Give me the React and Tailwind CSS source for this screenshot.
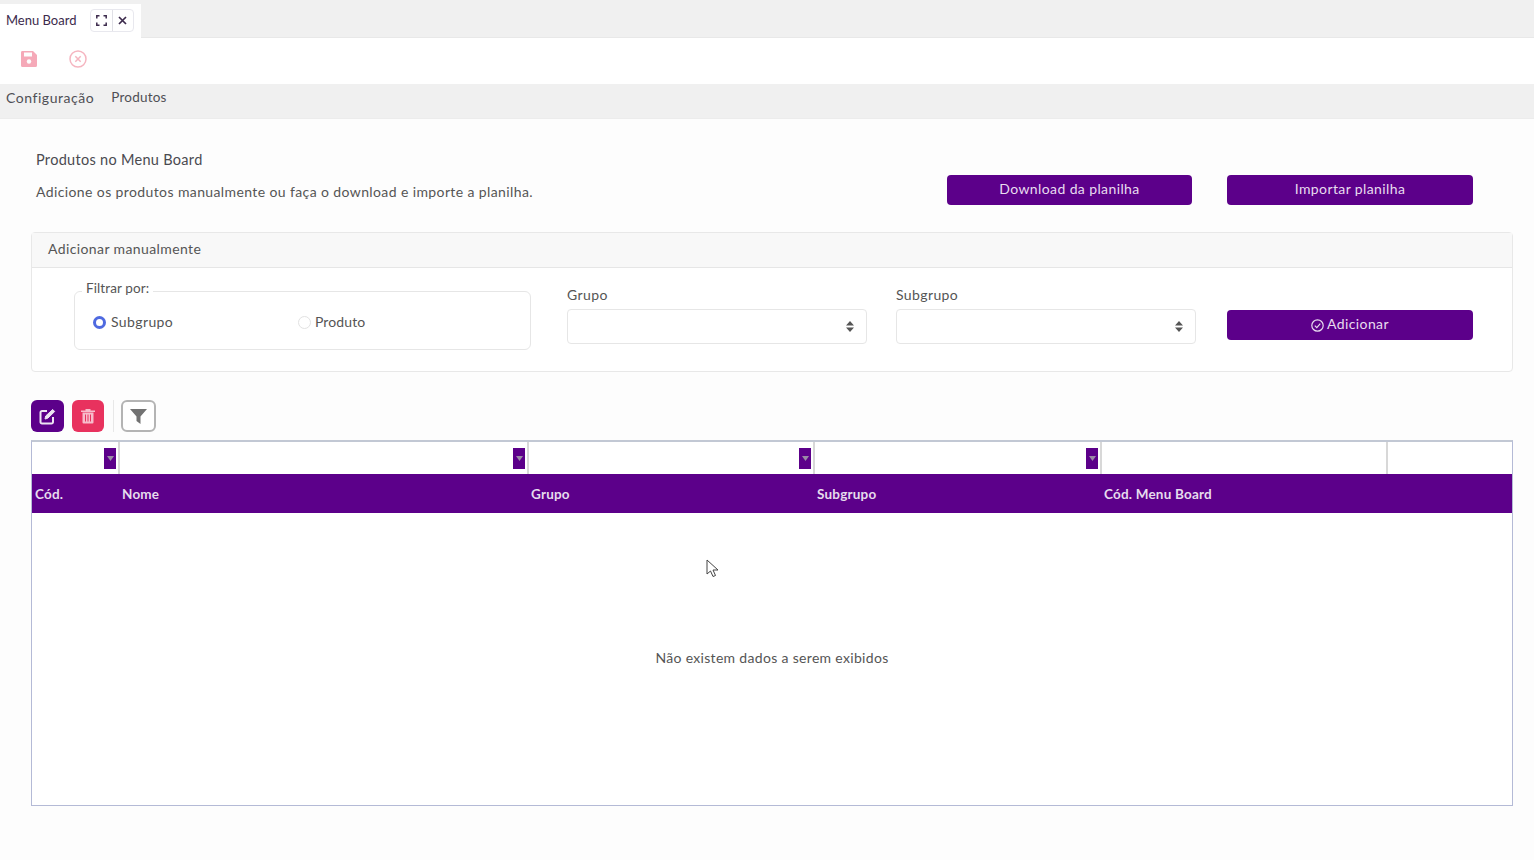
const P = "bg-[#5c008a]";

function Sel() {
  return (
    <div className="h-[35px] rounded border border-[#e6e6e6] bg-white flex items-center justify-end pr-[12px]">
      <svg width="8" height="11" viewBox="0 0 8 11"><path d="M4 0 8 4.400H0zM4 11 0 6.600h8z" fill="#555" /></svg>
    </div>
  );
}

function Fil() {
  return (
    <div className={`absolute right-[2px] top-[6px] w-[12px] h-[21px] ${P} flex items-center justify-center`}>
      <svg width="7" height="5" viewBox="0 0 7 5"><path d="M0 0h7L3.500 5z" fill="#9a8aa6" /></svg>
    </div>
  );
}

export default function App() {
  const cols = [true, true, true, true, false, null];
  const heads = ["Cód.", "Nome", "Grupo", "Subgrupo", "Cód. Menu Board", ""];
  return (
    <div className="relative w-[1534px] h-[860px] overflow-hidden bg-[#fdfdfd] text-[#555] text-[14px]" style={{ fontFamily: '"Lato", "Open Sans", sans-serif', letterSpacing: "0.39px" }}>
      {/* tab bar */}
      <div className="h-[38px] bg-[#f0f0f0] border-b border-[#e8e8e8] flex items-end">
        <div className="w-[141px] h-[34px] bg-white flex items-center pl-[6px] mb-[-1px] pb-[2px]">
          <span className="text-[#3c2a4c] text-[13px] tracking-normal w-[84px] whitespace-nowrap pt-[1px]">Menu Board</span>
          <div className="flex h-[23px] w-[44px] border border-[#e8e8ee] rounded">
            <div className="flex-1 flex items-center justify-center border-r border-[#e0e0e6]">
              <svg width="11" height="11" viewBox="0 0 11 11" fill="none" stroke="#3c2a4c" strokeWidth="1.500"><path d="M.8 3.500V.8h2.700M7.500.8h2.700v2.700M10.200 7.500v2.700H7.500M3.500 10.200H.8V7.500" /></svg>
            </div>
            <div className="flex-1 flex items-center justify-center">
              <svg width="9" height="9" viewBox="0 0 9 9" fill="none" stroke="#3c2a4c" strokeWidth="1.700"><path d="M1 1l7 7M8 1 1 8" /></svg>
            </div>
          </div>
        </div>
      </div>
      {/* toolbar */}
      <div className="h-[46px] bg-white flex items-center pl-[20px] pb-[4px] gap-[31px]">
        <svg width="18" height="18" viewBox="0 0 18 18"><path d="M2 1h11l4 4v10.500a1.500 1.500 0 0 1-1.500 1.500h-13A1.500 1.500 0 0 1 1 15.500v-13A1.500 1.500 0 0 1 2 1z" fill="#f5a9b8" /><rect x="4" y="2.500" width="8" height="4" fill="#fdfdfd" /><circle cx="9" cy="11.500" r="2.200" fill="#fdfdfd" /></svg>
        <svg width="18" height="18" viewBox="0 0 18 18" fill="none" stroke="#f5b5c0" strokeWidth="1.500"><circle cx="9" cy="9" r="8" /><path d="M6.300 6.300l5.400 5.400M11.700 6.300l-5.400 5.400" /></svg>
      </div>
      {/* nav */}
      <div className="h-[35px] bg-[#f0f0f0] border-b border-[#ececec] flex items-center pl-[6px] pb-[8px] gap-[17px] text-[#4f4f55]">
        <span className="tracking-[0.55px]">Configuração</span>
        <span className="text-[13.5px] tracking-[0.2px]">Produtos</span>
      </div>

      <main className="pl-[31px] pr-[21px]">
        {/* intro */}
        <div className="h-[113px] flex items-start">
          <div className="pl-[5px] pt-[31px] flex-1">
            <div className="text-[14.5px] tracking-[0.3px] text-[#4a4a50] leading-[20px]">Produtos no Menu Board</div>
            <div className="mt-[12px] leading-[20px] whitespace-nowrap">Adicione os produtos manualmente ou faça o download e importe a planilha.</div>
          </div>
          <div className="flex gap-[35px] pt-[56px] pr-[40px]">
            <button className={`w-[245px] h-[30px] rounded pb-[3px] ${P} text-[#e8dcef] text-[14px]`}>Download da planilha</button>
            <button className={`w-[246px] h-[30px] rounded pb-[3px] ${P} text-[#e8dcef] text-[14px]`}>Importar planilha</button>
          </div>
        </div>

        {/* card */}
        <section className="h-[140px] rounded border border-[#e8e8e8] bg-white">
          <div className="h-[35px] bg-[#f8f8f8] border-b border-[#e6e6e6] flex items-center pl-[16px] pb-[3px]">Adicionar manualmente</div>
          <div className="flex items-start pl-[42px] pr-[39px]">
            <fieldset className="w-[457px] h-[71px] mt-[11px] rounded-md border border-[#e6e6e6] pl-[7px] m-0">
              <legend className="px-[4px] leading-[17px] pt-[1px] pb-[6px] text-[13.5px] tracking-[0.1px]">Filtrar por:</legend>
              <div className="flex items-center pl-[10px] pt-[8px]">
                <span className="w-[13px] h-[13px] rounded-full border-[3px] border-[#4f6ae0] bg-white ml-[1px]" />
                <span className="ml-[5px] w-[187px] pb-[1px]">Subgrupo</span>
                <span className="w-[13px] h-[13px] rounded-full border border-[#e2e2e2] bg-white" />
                <span className="ml-[4px] pb-[1px] tracking-[0.1px]">Produto</span>
              </div>
            </fieldset>
            <div className="w-[300px] ml-[36px] pt-[17px]">
              <div className="leading-[20px] mb-[4px]">Grupo</div>
              <Sel />
            </div>
            <div className="w-[300px] ml-[29px] pt-[17px]">
              <div className="leading-[20px] mb-[4px]">Subgrupo</div>
              <Sel />
            </div>
            <button className={`w-[246px] h-[30px] ml-[31px] mt-[42px] rounded ${P} text-[#e8dcef] flex items-center justify-center gap-[3px]`}>
              <svg width="13" height="13" viewBox="0 0 13 13" fill="none" stroke="#e8dcef" strokeWidth="1.200"><circle cx="6.500" cy="6.500" r="5.700" /><path d="M3.800 6.700l2 2 3.500-4" /></svg>
              <span className="pb-[3px]">Adicionar</span>
            </button>
          </div>
        </section>

        {/* actions */}
        <div className="h-[68px] flex items-center pt-[28px] pb-[8px]">
          <button className={`w-[33px] h-[32px] rounded-md ${P} flex items-center justify-center`}>
            <svg width="17" height="17" viewBox="0 0 17 17" fill="none" stroke="#ece4f2" strokeWidth="2"><path d="M8 3H3a1.500 1.500 0 0 0-1.500 1.500v9.500A1.500 1.500 0 0 0 3 15.500h9.500A1.500 1.500 0 0 0 14 14V9" /><path d="M6 11l.7-3 7-6.500 2 2-7 6.800z" fill="#ece4f2" strokeWidth="1" /></svg>
          </button>
          <button className="w-[32px] h-[32px] rounded-md bg-[#e8325e] ml-[8px] flex items-center justify-center">
            <svg width="14" height="16" viewBox="0 0 14 16"><path d="M0 2.500h14v1.500H0zM4.500 1h5v1.500h-5z" fill="#f7bccb" /><path d="M1.500 4.500h11v10a1 1 0 0 1-1 1h-9a1 1 0 0 1-1-1z" fill="#f7bccb" /><path d="M4.500 6.500v7M7 6.500v7M9.500 6.500v7" stroke="#e8325e" strokeWidth="1" /></svg>
          </button>
          <div className="w-px h-[32px] bg-[#e8e8e8] ml-[9px]" />
          <button className="w-[35px] h-[32px] rounded-md border-2 border-[#b4b4b4] bg-white ml-[7px] flex items-center justify-center">
            <svg width="17" height="15" viewBox="0 0 17 15"><path d="M0 0h17l-6.500 7.500V15l-4-3V7.500z" fill="#727272" /></svg>
          </button>
        </div>

        {/* table */}
        <section className="h-[366px] border border-[#b4bad6] border-t-2 border-t-[#c2c8d4] bg-white flex flex-col">
          <div className="grid grid-cols-[88px_409px_286px_287px_286px_1fr] h-[32px]">
            {cols.map((f, i) => (
              <div key={i} className={`relative ${i < 5 ? "border-r-2 border-[#d8d8d8]" : ""}`}>{f && <Fil />}</div>
            ))}
          </div>
          <div className={`grid grid-cols-[87px_409px_286px_287px_286px_1fr] h-[39px] items-center pt-[1px] ${P} text-[#e6dced] text-[13.5px] tracking-[0.2px] font-bold`}>
            {heads.map((h, i) => (
              <div key={i} className="pl-[3px] whitespace-nowrap">{h}</div>
            ))}
          </div>
          <div className="flex-1 flex items-center justify-center pb-[4px] tracking-[0.32px]">Não existem dados a serem exibidos</div>
        </section>
      </main>

      {/* cursor */}
      <svg className="absolute left-[706px] top-[559px]" width="13" height="19" viewBox="0 0 13 19"><path d="M1 1v14l3.500-3 2.500 5.500 2.500-1-2.500-5.500H12z" fill="#fff" stroke="#444" strokeWidth="1" /></svg>
    </div>
  );
}
